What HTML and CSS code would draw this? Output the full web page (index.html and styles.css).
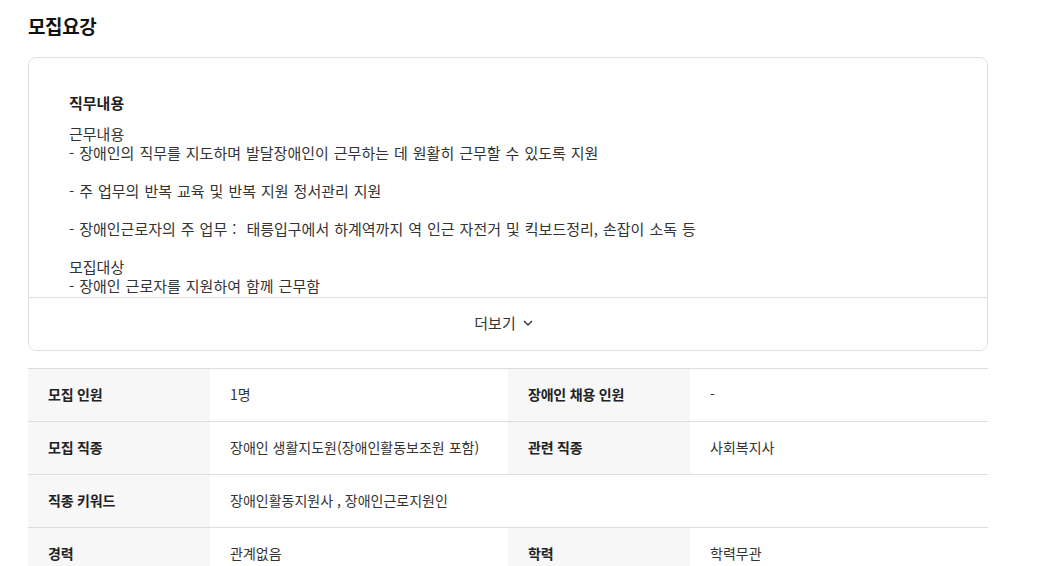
FILE: index.html
```html
<!DOCTYPE html>
<html lang="ko">
<head>
<meta charset="utf-8">
<link rel="stylesheet" href="styles.css">
</head>
<body>
<section class="recruit">
  <h2 class="title">모집요강</h2>
  <div class="card">
    <div class="card-body">
      <h3 class="sub">직무내용</h3>
      <div class="desc">근무내용<br>- 장애인의 직무를 지도하며 발달장애인이 근무하는 데 원활히 근무할 수 있도록 지원<br><br>- 주 업무의 반복 교육 및 반복 지원 정서관리 지원<br><br>- 장애인근로자의 주 업무 :&nbsp; 태릉입구에서 하계역까지 역 인근 자전거 및 킥보드정리, 손잡이 소독 등<br><br>모집대상<br>- 장애인 근로자를 지원하여 함께 근무함</div>
    </div>
    <button class="more"><span>더보기</span><svg class="chev" width="10" height="6" viewBox="0 0 10 6"><path d="M1 1l4 4 4-4" fill="none" stroke="#333" stroke-width="1.4"/></svg></button>
  </div>
  <div class="table">
    <div class="th">모집 인원</div><div class="td">1명</div>
    <div class="th">장애인 채용 인원</div><div class="td">-</div>
    <div class="th">모집 직종</div><div class="td">장애인 생활지도원(장애인활동보조원 포함)</div>
    <div class="th">관련 직종</div><div class="td">사회복지사</div>
    <div class="th">직종 키워드</div><div class="td span3">장애인활동지원사 , 장애인근로지원인</div>
    <div class="th">경력</div><div class="td">관계없음</div>
    <div class="th">학력</div><div class="td">학력무관</div>
  </div>
</section>
</body>
</html>
```

FILE: styles.css
```css
* { box-sizing: border-box; }
body {
  margin: 0;
  font-family: "Noto Sans CJK KR", "Noto Sans", sans-serif;
  color: #333;
  background: #fff;
}
.recruit {
  width: 960px;
  margin-left: 28px;
  padding-top: 12px;
}
.title {
  margin: 0;
  font-size: 19px;
  font-weight: 700;
  color: #111;
  line-height: 28px;
  letter-spacing: -0.4px;
}
.card {
  margin-top: 17px;
  border: 1px solid #ddd;
  border-radius: 8px;
  overflow: hidden;
}
.card-body {
  height: 240px;
  overflow: hidden;
  padding: 33px 40px 0;
  border-bottom: 1px solid #ddd;
}
.sub {
  margin: 0 0 9px;
  font-size: 15px;
  font-weight: 700;
  line-height: 24px;
  color: #222;
}
.desc {
  font-size: 15px;
  line-height: 19px;
  word-spacing: 0.8px;
}
.more {
  display: flex;
  align-items: center;
  justify-content: center;
  gap: 7px;
  width: 100%;
  height: 52px;
  border: 0;
  background: #fff;
  font-family: inherit;
  font-size: 15px;
  color: #333;
  padding: 0 9px 3px 0;
}
.table {
  margin-top: 17px;
  display: grid;
  grid-template-columns: 182px 298px 182px 298px;
  border-top: 1px solid #ddd;
}
.th, .td {
  height: 53px;
  display: flex;
  align-items: center;
  padding-bottom: 2px;
  border-bottom: 1px solid #ddd;
  font-size: 14px;
}
.th {
  background: #f7f7f7;
  padding-left: 20px;
  font-weight: 700;
  color: #222;
  letter-spacing: -0.2px;
}
.td {
  padding-left: 20px;
  color: #333;
}
.span3 { grid-column: span 3; }
```
